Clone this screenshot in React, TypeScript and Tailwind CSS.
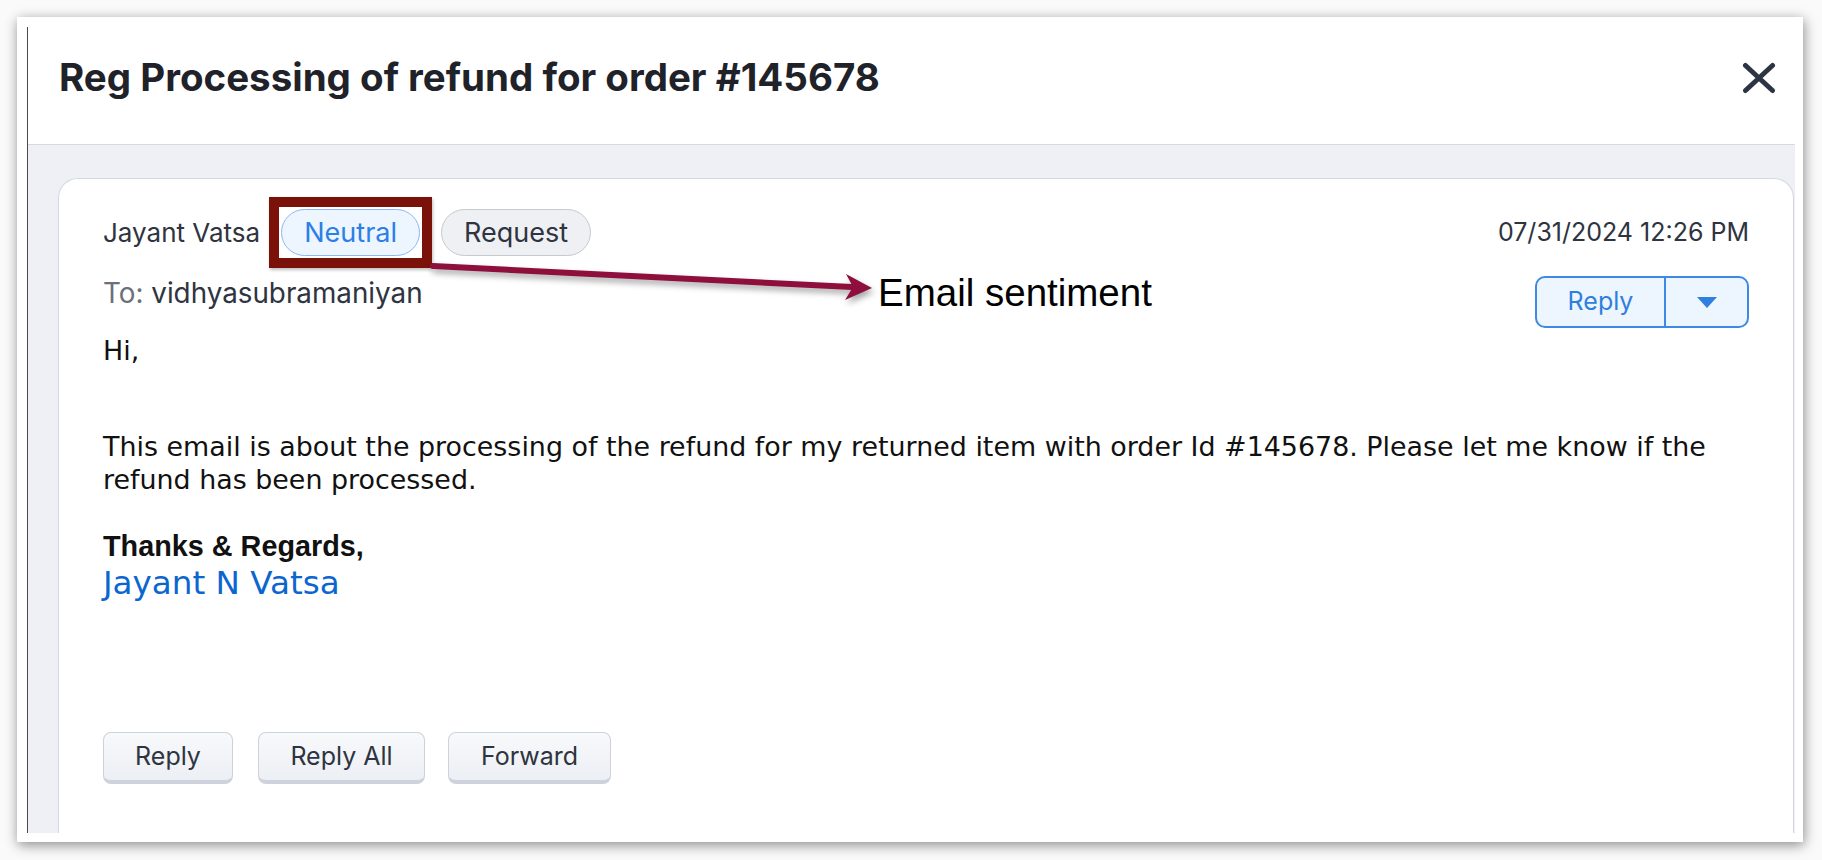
const ui = "font-['Inter',sans-serif]";

function Pill({ label, tone }: { label: string; tone: "blue" | "gray" }) {
  const cls =
    tone === "blue"
      ? "w-[139px] border-[1.5px] border-[#8db8f2] bg-[#edf5ff] text-[#2b7fe6]"
      : "w-[150px] border-[1.5px] border-[#c6c9cf] bg-[#eef0f4] text-[#2e3440]";
  return (
    <span className={`flex h-[47px] items-center justify-center rounded-full text-[27px] leading-none ${cls}`}>
      {label}
    </span>
  );
}

function FooterButton({ label, className }: { label: string; className?: string }) {
  return (
    <button
      className={`flex h-[52px] items-center justify-center rounded-[8px] border-[1.5px] border-b-[4px] border-[#cdd2dc] bg-gradient-to-b from-[#f8f9fb] to-[#eceff4] text-[25px] text-[#2e3440] ${className ?? ""}`}
    >
      {label}
    </button>
  );
}

export default function App() {
  return (
    <div className="relative h-[860px] w-[1822px] overflow-hidden bg-[#fafafa] pl-[17px] pt-[17px]">
      {/* screenshot frame */}
      <div className="h-[825px] w-[1786px] bg-white pb-[9px] pl-[10px] pr-[8px] pt-[10px] shadow-[1px_3px_12px_rgba(0,0,0,0.45)]">
        <div className={`flex h-[806px] w-[1768px] flex-col overflow-hidden border-l border-[#4a4a4a] ${ui}`}>
          {/* header */}
          <div className="flex h-[118px] shrink-0 items-start justify-between border-b border-[#d5dae3] bg-white pl-[31px] pr-[19px] pt-[27px]">
            <h1 className="text-[38.5px] font-bold leading-[47px] text-[#1f2329]">
              Reg Processing of refund for order #145678
            </h1>
            <svg className="mt-[8px]" width="34" height="32" viewBox="0 0 34 32" fill="none">
              <path d="M3.5 3.5 L30.5 28.5 M30.5 3.5 L3.5 28.5" stroke="#2d3545" strokeWidth="5" strokeLinecap="round" />
            </svg>
          </div>

          {/* thread area */}
          <div className="flex-1 bg-[#eef0f5] pl-[30px] pr-[1px] pt-[33px]">
            <div className="h-[700px] rounded-t-[20px] border border-b-0 border-[#d3d8e0] bg-white pl-[44px] pr-[44px] pt-[30px]">
              <div className="flex items-start justify-between">
                <div>
                  <div className="flex items-center gap-[21px]">
                    <span className="text-[26px] leading-none text-[#2e3440]">Jayant Vatsa</span>
                    <span className="-m-[12px] border-[10px] border-[#7b1209] bg-white p-[2px] shadow-[1px_2px_3px_rgba(0,0,0,0.25)]">
                      <Pill label="Neutral" tone="blue" />
                    </span>
                    <Pill label="Request" tone="gray" />
                  </div>
                  <div className="mt-[20px] text-[27.8px] leading-[34px]">
                    <span className="text-[#6b7079]">To: </span>
                    <span className="text-[#2e3440]">vidhyasubramaniyan</span>
                  </div>
                </div>
                <div className="flex flex-col items-end">
                  <div className="mt-[6px] text-[25px] leading-[34px] text-[#2e3440]">07/31/2024 12:26 PM</div>
                  <div className="mt-[27px] flex h-[52px] w-[214px] overflow-hidden rounded-[10px] border-2 border-[#3d8ae5] bg-[#edf5ff]">
                    <button className="flex w-[129px] items-center justify-center border-r-2 border-[#3d8ae5] text-[25px] text-[#2f7fe0]">
                      Reply
                    </button>
                    <button className="flex flex-1 items-center justify-center">
                      <svg width="20" height="11" viewBox="0 0 20 11">
                        <path d="M0 0 H20 L10 11 Z" fill="#2f7fe0" />
                      </svg>
                    </button>
                  </div>
                </div>
              </div>

              {/* message body */}
              <div className="mt-[7px] font-['DejaVu_Sans',sans-serif] text-[26.9px] leading-[32.5px] text-[#111]">
                <p>Hi,</p>
                <p className="mt-[63.5px]">
                  This email is about the processing of the refund for my returned item with order Id #145678. Please let me know if the refund has been processed.
                </p>
                <p className="mt-[34px] font-['Liberation_Sans',sans-serif] text-[28.8px] font-bold leading-[33px]">
                  Thanks &amp; Regards,
                </p>
                <p className="mt-[2px] text-[32.6px] leading-[37px] text-[#0b66cf]">Jayant N Vatsa</p>
              </div>

              <div className={`mt-[130px] flex ${ui}`}>
                <FooterButton label="Reply" className="w-[130px]" />
                <FooterButton label="Reply All" className="ml-[25px] w-[167px]" />
                <FooterButton label="Forward" className="ml-[23px] w-[163px]" />
              </div>
            </div>
          </div>
        </div>
      </div>

      {/* annotation: arrow + label */}
      <svg
        className="absolute left-[420px] top-[250px] drop-shadow-[2px_4px_3px_rgba(0,0,0,0.35)]"
        width="470"
        height="60"
        viewBox="0 0 470 60"
      >
        <path d="M13 16 L432 37" stroke="#8e0f3c" strokeWidth="6" strokeLinecap="round" />
        <path d="M452 38 L426 24 L433 37 L425 50 Z" fill="#8e0f3c" />
      </svg>
      <span className="absolute left-[878px] top-[271px] font-['Liberation_Sans',sans-serif] text-[38.5px] leading-[43px] text-black">
        Email sentiment
      </span>
    </div>
  );
}
